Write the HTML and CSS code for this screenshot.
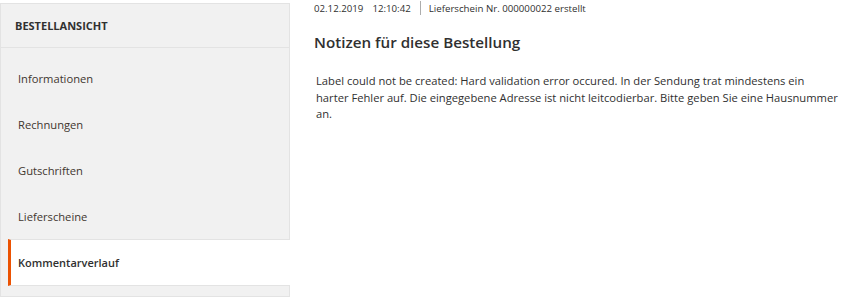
FILE: index.html
```html
<!DOCTYPE html>
<html lang="de">
<head>
<meta charset="utf-8">
<link rel="stylesheet" href="styles.css">
</head>
<body>
<div class="page">
  <aside class="nav">
    <div class="nav-title">BESTELLANSICHT</div>
    <ul class="nav-list">
      <li class="nav-item">Informationen</li>
      <li class="nav-item">Rechnungen</li>
      <li class="nav-item">Gutschriften</li>
      <li class="nav-item">Lieferscheine</li>
      <li class="nav-item active">Kommentarverlauf</li>
    </ul>
  </aside>
  <main class="content">
    <div class="meta">
      <span class="date">02.12.2019</span>
      <span class="time">12:10:42</span>
      <span class="sep"></span>
      <span class="note">Lieferschein Nr. 000000022 erstellt</span>
    </div>
    <h2 class="title">Notizen für diese Bestellung</h2>
    <p class="comment">Label could not be created: Hard validation error occured. In der Sendung trat mindestens ein<br>harter Fehler auf. Die eingegebene Adresse ist nicht leitcodierbar. Bitte geben Sie eine Hausnummer an.</p>
  </main>
</div>
</body>
</html>
```
FILE: styles.css
```css
html, body {
  margin: 0;
  padding: 0;
  background: #fff;
}
body {
  font-family: "Open Sans", "DejaVu Sans", sans-serif;
  color: #303030;
}
.page {
  display: flex;
  align-items: flex-start;
  padding-top: 3px;
}
.nav {
  width: 288px;
  background: #f1f1f1;
  border: 1px solid #e3e3e3;
  padding-bottom: 10px;
  flex-shrink: 0;
}
.nav-title {
  height: 43px;
  display: flex;
  align-items: center;
  padding-left: 14px;
  font-size: 11px;
  font-weight: 700;
  border-bottom: 1px solid #e3e3e3;
  color: #303030;
}
.nav-list {
  list-style: none;
  margin: 0;
  padding: 7px 0 0 0;
}
.nav-item {
  height: 46px;
  display: flex;
  align-items: center;
  padding-left: 17px;
  font-size: 11.2px;
  color: #41362f;
}
.nav-item.active {
  background: #fff;
  margin-left: 7px;
  margin-right: -1px;
  border-left: 3px solid #eb5202;
  padding-left: 7px;
  font-weight: 600;
  font-size: 11px;
  color: #303030;
  border-top: 1px solid #e3e3e3;
  border-bottom: 1px solid #e3e3e3;
  height: 45px;
}
.content {
  margin-left: 24px;
  flex: 1;
  padding-right: 0;
}
.meta {
  display: flex;
  align-items: center;
  font-size: 9.7px;
  color: #303030;
  height: 14px;
  margin-top: -2px;
}
.time {
  margin-left: 9px;
}
.sep {
  width: 1px;
  height: 14px;
  background: #adadad;
  margin: 0 8px 0 9px;
}
.title {
  margin: 17px 0 0 0;
  font-size: 15.2px;
  font-weight: 600;
  line-height: 20px;
  color: #303030;
}
.comment {
  margin: 21px 0 0 2px;
  font-size: 11.2px;
  line-height: 16.5px;
  max-width: 532px;
  color: #303030;
}
```
